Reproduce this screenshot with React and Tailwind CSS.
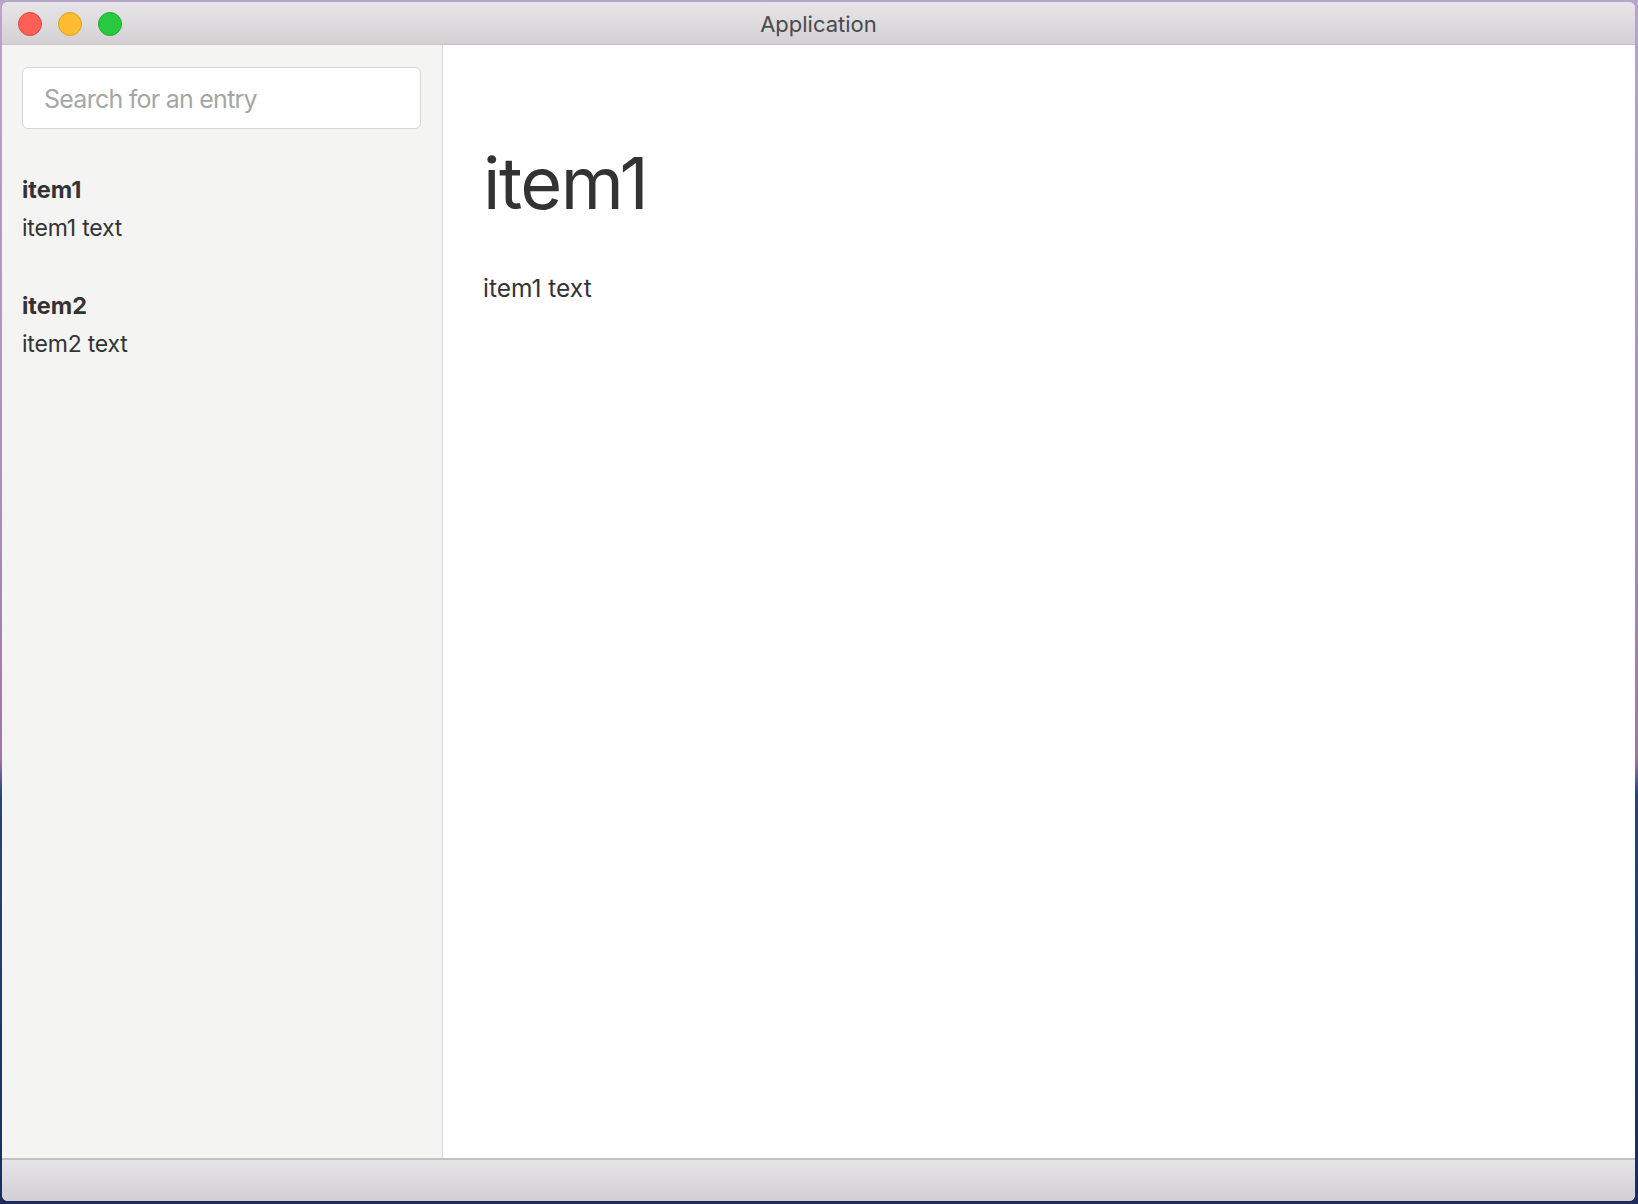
export default function App() {
  const font = { fontFamily: "Inter, 'Noto Sans', sans-serif" };
  return (
    <div
      className="w-[1638px] h-[1204px] pt-[2px] pl-[2px] pr-[3px] pb-[3px] bg-[linear-gradient(to_bottom,#b7a6c9_0%,#a592b6_40%,#9a7a9e_63%,#2b4478_66%,#1e2c5c_100%)]"
      style={font}
    >
      <div className="w-full h-full flex flex-col rounded-[6px] overflow-hidden bg-white">
        {/* Title bar */}
        <div className="relative h-[43px] shrink-0 flex items-center justify-center bg-[linear-gradient(to_bottom,#e7e5e7,#d3d1d3)] border-b border-[#c4c2c4]">
          <div className="absolute left-[16px] top-[10px] flex gap-[16px]">
            <div className="w-[24px] h-[24px] rounded-full bg-[#fe5f57] border border-[#e0443e]" />
            <div className="w-[24px] h-[24px] rounded-full bg-[#febc2e] border border-[#dea123]" />
            <div className="w-[24px] h-[24px] rounded-full bg-[#28c840] border border-[#1aab29]" />
          </div>
          <span className="text-[22px] text-[#4b4a4b] leading-none mt-[1px]">Application</span>
        </div>

        {/* Body */}
        <div className="flex-1 flex min-h-0">
          <aside className="w-[441px] shrink-0 bg-[#f4f4f2] border-r border-[#d9d9d9] pl-[20px] pr-[20px] pt-[22px]">
            <div className="h-[62px] w-[399px] bg-white border border-[#d6d6d6] rounded-[6px] flex items-center pl-[21px]">
              <span className="text-[25px] tracking-[-0.75px] text-[#a6a6a6] leading-none mt-[3px]">Search for an entry</span>
            </div>
            <div className="mt-[46px] flex flex-col">
              <div className="text-[23.5px] leading-[30px] font-bold text-[#333333]">item1</div>
              <div className="mt-[8px] text-[23px] tracking-[-0.2px] leading-[30px] text-[#333333]">item1 text</div>
              <div className="mt-[48px] text-[23.5px] leading-[30px] font-bold text-[#333333]">item2</div>
              <div className="mt-[8px] text-[23px] tracking-[-0.2px] leading-[30px] text-[#333333]">item2 text</div>
            </div>
          </aside>
          <main className="flex-1 bg-white pl-[40px] pt-[98px]">
            <h1 className="text-[72px] tracking-[-1.5px] leading-[80px] text-[#333333] font-normal">item1</h1>
            <p className="mt-[50px] text-[24.5px] leading-[30px] text-[#333333]">item1 text</p>
          </main>
        </div>

        {/* Bottom bar */}
        <div className="h-[43px] shrink-0 border-t-2 border-[#c1c1c1] bg-[linear-gradient(to_bottom,#e6e4e6,#d1cfd1)]" />
      </div>
    </div>
  );
}
